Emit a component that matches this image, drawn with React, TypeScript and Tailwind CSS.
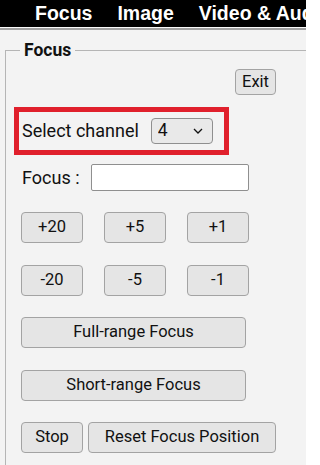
import { useState } from 'react'

const btn =
  'h-[31px] rounded-[4px] border border-[#a3a3a3] bg-[#e5e5e5] text-[16.5px] text-[#111] leading-none hover:bg-[#dcdcdc]'

export default function App() {
  const [channel, setChannel] = useState('4')
  const [focus, setFocus] = useState('')

  return (
    <div className="min-h-[465px] w-[306px] overflow-hidden bg-[#f3f3f3] font-['Roboto',sans-serif] text-[#111]">
      {/* top tabs */}
      <div className="flex h-[27px] items-center gap-[25px] bg-black pl-[35px] font-['Liberation_Sans',Arial,sans-serif] text-[19.5px] font-bold whitespace-nowrap text-white">
        <span>Focus</span>
        <span>Image</span>
        <span>Video &amp; Audio</span>
      </div>
      <div className="h-px bg-[#fafafa]" />
      <div className="h-[2px] bg-[#a0a0a0]" />

      <fieldset className="mt-[9px] ml-[5px] w-[330px] border border-[#b5b5b5] pb-[20px]">
        <legend className="ml-[14px] px-[4px] text-[17.5px] leading-[22px] font-bold">Focus</legend>

        <div className="pl-[8px]">
          <div className="mt-[8px] pl-[221px]">
            <button className="h-[26px] w-[41px] rounded-[4px] border border-[#a3a3a3] bg-[#e5e5e5] text-[16.5px] leading-none">
              Exit
            </button>
          </div>

          <div className="mt-[12px] flex h-[48px] w-[215px] items-center border-[5px] border-[#e0202c] pl-[3px]">
            <span className="text-[18px] leading-none">Select channel</span>
            <div className="relative ml-[12px] h-[26px] w-[62px]">
              <select
                value={channel}
                onChange={(e) => setChannel(e.target.value)}
                className="h-full w-full appearance-none rounded-[4px] border border-[#8f8f8f] bg-[#e9e9e9] pl-[6px] text-[17.5px] leading-none"
              >
                {['1', '2', '3', '4'].map((c) => (
                  <option key={c} value={c}>
                    {c}
                  </option>
                ))}
              </select>
              <svg
                className="pointer-events-none absolute top-[10px] right-[10px]"
                width="10"
                height="6"
                viewBox="0 0 10 6"
                fill="none"
              >
                <path d="M1 1l4 4 4-4" stroke="#111" strokeWidth="1.3" />
              </svg>
            </div>
          </div>

          <div className="mt-[9px] flex h-[27px] items-center pl-[8px]">
            <span className="w-[69px] text-[18px] leading-none">Focus :</span>
            <input
              value={focus}
              onChange={(e) => setFocus(e.target.value)}
              className="h-[27px] w-[158px] rounded-[2px] border border-[#8f8f8f] bg-white px-1 text-[16px] outline-none"
            />
          </div>

          <div className="mt-[21px] flex gap-[21px] pl-[7px]">
            <button className={`${btn} w-[62px]`}>+20</button>
            <button className={`${btn} w-[62px]`}>+5</button>
            <button className={`${btn} w-[62px]`}>+1</button>
          </div>

          <div className="mt-[22px] flex gap-[21px] pl-[7px]">
            <button className={`${btn} w-[62px]`}>-20</button>
            <button className={`${btn} w-[62px]`}>-5</button>
            <button className={`${btn} w-[62px]`}>-1</button>
          </div>

          <div className="mt-[21px] pl-[7px]">
            <button className={`${btn} w-[225px]`}>Full-range Focus</button>
          </div>

          <div className="mt-[22px] pl-[7px]">
            <button className={`${btn} w-[225px]`}>Short-range Focus</button>
          </div>

          <div className="mt-[21px] flex gap-[5px] pl-[7px]">
            <button className={`${btn} w-[62px]`}>Stop</button>
            <button className={`${btn} w-[188px]`}>Reset Focus Position</button>
          </div>
        </div>
      </fieldset>
    </div>
  )
}
